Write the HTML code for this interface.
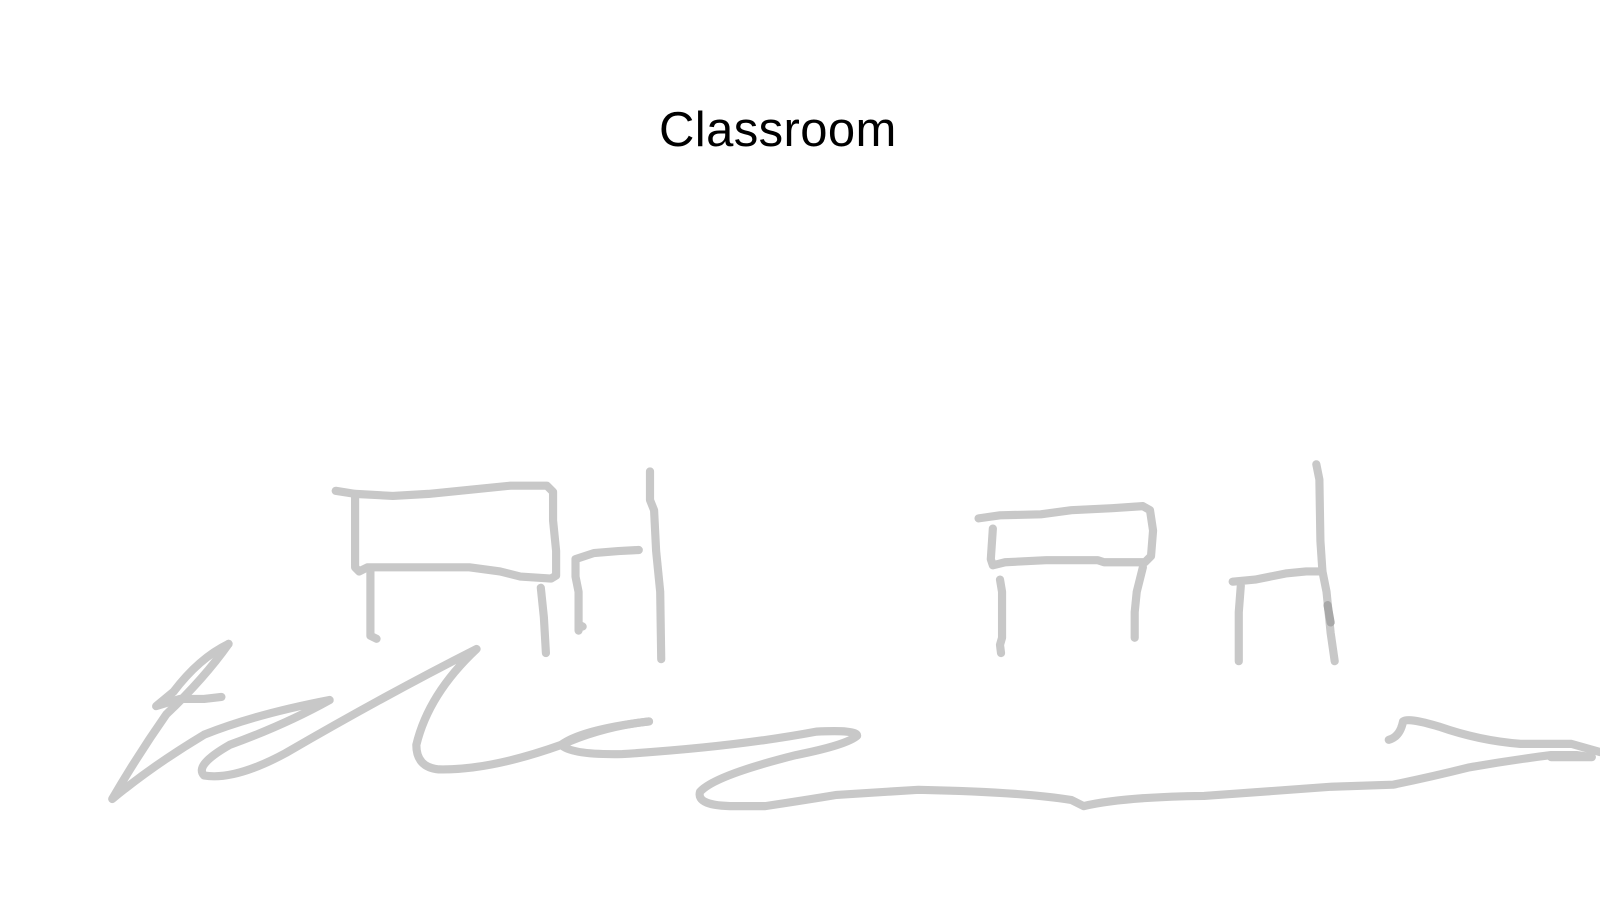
<!DOCTYPE html>
<html><head><meta charset="utf-8"><style>
html,body{margin:0;padding:0;background:#fff;width:1600px;height:900px;overflow:hidden}
.t{position:absolute;left:659px;top:102px;font-family:"Liberation Sans",Arial,sans-serif;font-size:49px;color:#000;letter-spacing:0.4px}
svg{position:absolute;left:0;top:0}
</style></head><body>
<div class="t">Classroom</div>
<svg width="1600" height="900" viewBox="0 0 1568 882" preserveAspectRatio="none">
<g fill="none" stroke="#c8c8c8" stroke-width="8" stroke-linecap="round" stroke-linejoin="round" style="stroke-linejoin:round">
<path d="M329 481 L348 484 L348 556 L352 560 L360 556 L460 556 L490 560 L510 565 L540 567 L545 564 L545 540 L542 510 L542 482 L536 476 L500 476 L460 480 L420 484 L385 486 L348 484"/>
<path d="M363 559 L363 623 L369 626"/>
<path d="M530 576 L533 605 L535 640"/>
<path d="M637 462 L637 490 L641 500 L643 540 L647 580 L648 646"/>
<path d="M567 618 L567 580 L564 565 L564 548 L582 542 L606 540 L626 539"/>
<path d="M567 612 L571 614"/>
<path d="M959 508 L980 505 L1020 504 L1050 500 L1090 498 L1120 496 L1127 500 L1130 520 L1128 545 L1122 551 L1082 551 L1076 549 L1025 549 L985 551 L973 554 L971 548 L973 518"/>
<path d="M980 568 L982 580 L982 625 L980 632 L981 640"/>
<path d="M1120 556 L1114 580 L1112 600 L1112 625"/>
<path d="M1290 455 L1293 470 L1294 530 L1296 560 L1300 580 L1304 620 L1308 648"/>
<path d="M1208 570 L1230 568 L1260 562 L1280 560 L1296 560"/>
<path d="M1216 574 L1214 600 L1214 648"/>
<path d="M224 631 Q195 645 170 678 L153 692 L176 685 L200 685 L217 683"/>
<path d="M224 631 Q200 665 163 700 Q135 740 110 783 Q150 750 200 720 Q250 700 323 686 Q280 710 225 730 Q190 750 200 760 Q230 765 280 738 Q380 680 467 636 Q420 680 408 730 Q408 752 430 754 Q480 755 550 730 Q590 712 636 707"/>
<path d="M636 707 Q570 715 550 730 Q560 740 610 739 Q720 732 800 717 Q840 715 840 721 Q830 730 780 740 Q700 760 686 776 Q682 790 720 790 L750 790 Q790 784 820 779 L900 774 Q1000 776 1050 784 L1062 790 Q1100 781 1180 780 Q1260 774 1305 771 L1365 769 Q1400 762 1440 752 Q1480 745 1520 740 L1545 740 L1560 742 L1520 742"/>
<path d="M1361 725 Q1372 722 1375 707 Q1380 703 1410 712 Q1450 726 1490 729 L1540 729 L1568 737"/>
</g>
<path d="M1301 593 L1304 610" stroke="#a8a8a8" stroke-width="8" stroke-linecap="round"/>
</svg>
</body></html>
